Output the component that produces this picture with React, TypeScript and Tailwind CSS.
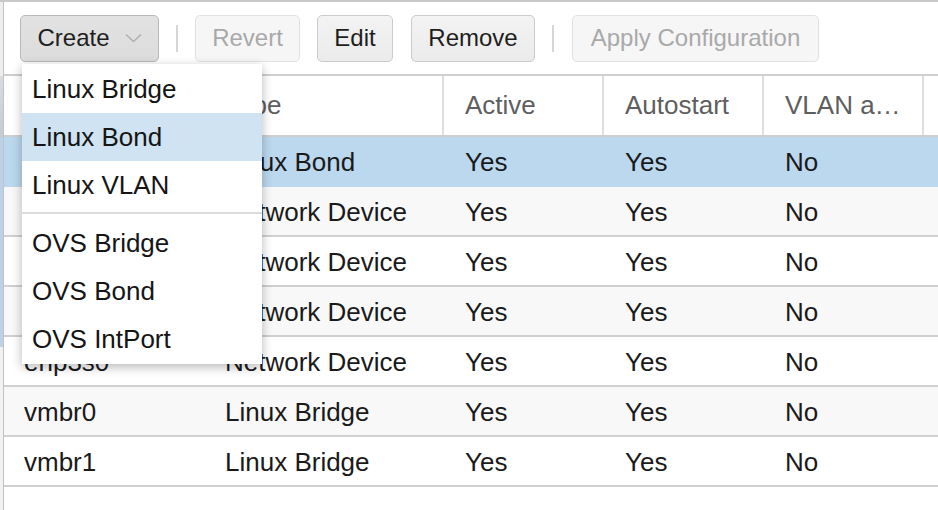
import React from "react";

const rows = [
  { name: "bond0", type: "Linux Bond", sel: true },
  { name: "eno1", type: "Network Device" },
  { name: "enp1s0", type: "Network Device" },
  { name: "enp2s0", type: "Network Device" },
  { name: "enp3s0", type: "Network Device" },
  { name: "vmbr0", type: "Linux Bridge" },
  { name: "vmbr1", type: "Linux Bridge" },
];

function Sep() {
  return <div className="w-[2px] h-[27px] bg-[#d6d6d6]" />;
}

function Btn({ children, disabled, pressed, w }: { children: React.ReactNode; disabled?: boolean; pressed?: boolean; w: string }) {
  const cls = disabled
    ? "bg-[#f6f6f6] border-[#e2e2e2] text-[#a9a9a9]"
    : pressed
    ? "bg-gradient-to-b from-[#e2e2e2] to-[#dcdcdc] border-[#b9b9b9] text-[#1e1e1e]"
    : "bg-gradient-to-b from-[#f3f3f3] to-[#ebebeb] border-[#cbcbcb] text-[#1e1e1e]";
  return (
    <div className={`h-[47px] ${w} flex items-center justify-center border rounded-[5px] text-[24px] leading-none whitespace-nowrap ${cls}`}>
      {children}
    </div>
  );
}

function MenuItem({ children, active }: { children: React.ReactNode; active?: boolean }) {
  return (
    <div className={`h-[48px] flex items-center pl-[10px] text-[26px] text-[#151515] ${active ? "bg-[#cfe3f2]" : ""}`}>
      {children}
    </div>
  );
}

export default function App() {
  return (
    <div
      className="w-[938px] h-[510px] bg-white relative overflow-hidden border-t-2 border-[#c9c9c9]"
      style={{ fontFamily: '"Liberation Sans", Arial, sans-serif' }}
    >
      <div className="flex h-full">
        {/* left strip */}
        <div className="w-[3px] flex flex-col">
          <div className="h-[74px] bg-[#eeeeee]" />
          <div className="h-[61px] bg-gradient-to-b from-[#d8dde2] to-[#c3ccd4]" />
          <div className="h-[210px] bg-[#b9d2e8]" />
          <div className="flex-1 bg-[#f2f2f2]" />
        </div>
        <div className="w-[1px] bg-[#c2c2c2]" />
        {/* main */}
        <div className="flex-1 flex flex-col">
          {/* toolbar */}
          <div className="h-[74px] shrink-0 flex items-center pl-[16px] border-b-2 border-[#cfcfcf]">
            <Btn pressed w="w-[139px]">
              <span>Create</span>
              <svg className="ml-[15px]" width="17" height="10" viewBox="0 0 17 10" fill="none">
                <path d="M1 1.5 L8.5 8.5 L16 1.5" stroke="#b0b0b0" strokeWidth="1.6" />
              </svg>
            </Btn>
            <div className="w-[17px]" />
            <Sep />
            <div className="w-[17px]" />
            <Btn disabled w="w-[105px]">Revert</Btn>
            <div className="w-[17px]" />
            <Btn w="w-[76px]">Edit</Btn>
            <div className="w-[18px]" />
            <Btn w="w-[124px]">Remove</Btn>
            <div className="w-[17px]" />
            <Sep />
            <div className="w-[18px]" />
            <Btn disabled w="w-[247px]">Apply Configuration</Btn>
          </div>
          {/* header */}
          <div className="h-[61px] shrink-0 flex border-b-2 border-[#cfcfcf] text-[26px] text-[#5e5e5e]">
            <div className="w-[200px] border-r-2 border-[#dedede] flex items-center pl-[20px]">Name</div>
            <div className="w-[240px] border-r-2 border-[#dedede] flex items-center pl-[21px]">Type</div>
            <div className="w-[160px] border-r-2 border-[#dedede] flex items-center pl-[21px]">Active</div>
            <div className="w-[160px] border-r-2 border-[#dedede] flex items-center pl-[21px]">Autostart</div>
            <div className="w-[160px] border-r-2 border-[#dedede] flex items-center pl-[21px] whitespace-nowrap">VLAN a…</div>
            <div className="flex-1" />
          </div>
          {/* rows */}
          {rows.map((r, i) => (
            <div
              key={r.name}
              className={`h-[50px] shrink-0 flex text-[26px] text-[#1a1a1a] border-b-2 ${
                r.sel ? "bg-[#bbd8ef] border-[#bbd8ef]" : i % 2 === 1 ? "bg-[#f8f8f8] border-[#d0d0d0]" : "bg-white border-[#d0d0d0]"
              }`}
            >
              <div className="w-[200px] flex items-center pl-[20px] pt-[3px]">{r.name}</div>
              <div className="w-[240px] flex items-center pl-[21px] pt-[3px]">{r.type}</div>
              <div className="w-[160px] flex items-center pl-[21px] pt-[3px]">Yes</div>
              <div className="w-[160px] flex items-center pl-[21px] pt-[3px]">Yes</div>
              <div className="w-[160px] flex items-center pl-[21px] pt-[3px]">No</div>
              <div className="flex-1" />
            </div>
          ))}
        </div>
      </div>
      {/* dropdown menu */}
      <div className="absolute left-[22px] top-[62px] w-[240px] bg-white shadow-[0_3px_10px_rgba(0,0,0,0.28)] py-[1px]">
        <MenuItem>Linux Bridge</MenuItem>
        <MenuItem active>Linux Bond</MenuItem>
        <MenuItem>Linux VLAN</MenuItem>
        <div className="h-[10px] pt-[3px]">
          <div className="h-[2px] w-full bg-[#dcdcdc]" />
        </div>
        <MenuItem>OVS Bridge</MenuItem>
        <MenuItem>OVS Bond</MenuItem>
        <MenuItem>OVS IntPort</MenuItem>
      </div>
    </div>
  );
}
